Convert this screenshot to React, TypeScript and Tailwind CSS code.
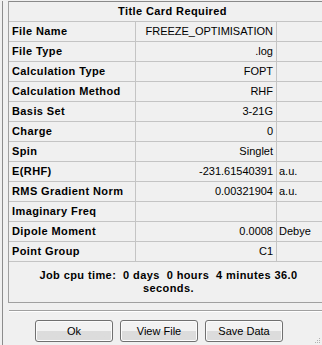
import React from "react";

type Row = { label: string; value: string; unit?: string };

const rows: Row[] = [
  { label: "File Name", value: "FREEZE_OPTIMISATION" },
  { label: "File Type", value: ".log" },
  { label: "Calculation Type", value: "FOPT" },
  { label: "Calculation Method", value: "RHF" },
  { label: "Basis Set", value: "3-21G" },
  { label: "Charge", value: "0" },
  { label: "Spin", value: "Singlet" },
  { label: "E(RHF)", value: "-231.61540391", unit: "a.u." },
  { label: "RMS Gradient Norm", value: "0.00321904", unit: "a.u." },
  { label: "Imaginary Freq", value: "" },
  { label: "Dipole Moment", value: "0.0008", unit: "Debye" },
  { label: "Point Group", value: "C1" },
];

const font = { fontFamily: "Tahoma, 'Liberation Sans', Arial, sans-serif" };

const Button = ({ children }: { children: React.ReactNode }) => (
  <button className="w-[78px] h-[22px] rounded-[3px] border border-[#707070] bg-gradient-to-b from-[#f2f2f2] from-50% to-[#dcdcdc] to-50% text-[11px] text-black shadow-[inset_0_0_0_1px_#fcfcfc]">
    {children}
  </button>
);

export default function App() {
  return (
    <div
      className="relative w-[322px] h-[345px] overflow-hidden bg-[#f0f0f0] pl-[2px] pt-[1px] text-black"
      style={font}
    >
      <div className="h-full border-l border-[#8c8c8c] pl-[5px]">
        {/* tableau */}
        <div className="w-[330px] border-l border-t border-[#a0a0a0] border-t-[#8a8a8a]">
          <div className="h-[20px] border-b border-[#c4c4c4] flex items-center justify-center text-[11px] font-bold tracking-[0.4px] pr-[2px]">
            Title Card Required
          </div>
          {rows.map((r) => (
            <div
              key={r.label}
              className="grid grid-cols-[127px_141px_1fr] h-[20px] border-b border-[#c4c4c4] text-[11px]"
            >
              <div className="border-r border-[#c4c4c4] pl-[3px] flex items-center font-bold tracking-[0.4px] whitespace-nowrap">
                {r.label}
              </div>
              <div className="border-r border-[#c4c4c4] pr-[3px] flex items-center justify-end whitespace-nowrap">
                {r.value}
              </div>
              <div className="pl-[2px] flex items-center whitespace-nowrap">
                {r.unit}
              </div>
            </div>
          ))}
          <div className="h-[41px] border-b border-[#a0a0a0] flex items-center justify-center">
            <p className="text-[11px] font-bold tracking-[0.4px] leading-[13px] text-center w-[300px] -ml-[10px] whitespace-pre-wrap">
              {"Job cpu time:  0 days  0 hours  4 minutes 36.0\nseconds."}
            </p>
          </div>
        </div>

        <div className="mt-[7px] ml-[1px] w-[330px] border-t border-[#a0a0a0] border-b border-b-white h-0" />

        <div className="mt-[8px] ml-[27px] flex gap-[7px]">
          <Button>Ok</Button>
          <Button>View File</Button>
          <Button>Save Data</Button>
        </div>
      </div>

      {/* poignée de redimensionnement */}
      <div className="absolute right-[2px] bottom-[2px] grid grid-cols-3 gap-[1px]">
        <span className="w-[1px] h-[1px]" />
        <span className="w-[1px] h-[1px]" />
        <span className="w-[1px] h-[1px] bg-[#b0b0b0]" />
        <span className="w-[1px] h-[1px]" />
        <span className="w-[1px] h-[1px] bg-[#b0b0b0]" />
        <span className="w-[1px] h-[1px] bg-[#b0b0b0]" />
        <span className="w-[1px] h-[1px] bg-[#b0b0b0]" />
        <span className="w-[1px] h-[1px] bg-[#b0b0b0]" />
        <span className="w-[1px] h-[1px] bg-[#b0b0b0]" />
      </div>
    </div>
  );
}
